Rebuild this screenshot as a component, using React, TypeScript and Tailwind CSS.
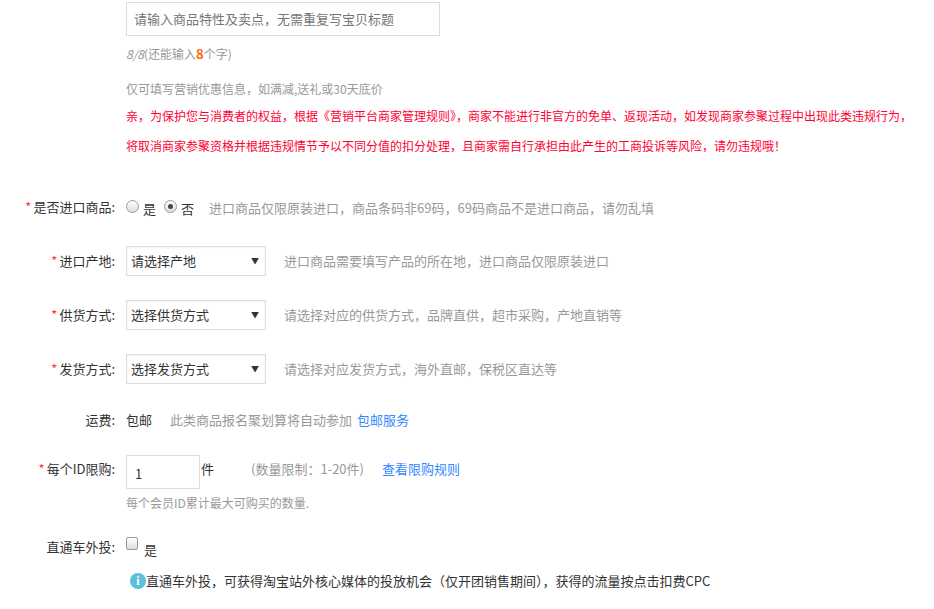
export default function App() {
  const font = { fontFamily: '"Microsoft YaHei","Noto Sans CJK SC",sans-serif' };
  const Label = ({ req, children }: { req?: boolean; children: React.ReactNode }) => (
    <div className="w-[126px] shrink-0 text-right text-[13px] text-[#333] pr-[11px]">
      {req && <span className="text-[#f33] mr-[2px]">*</span>}
      {children}
    </div>
  );
  const Select = ({ text }: { text: string }) => (
    <div className="w-[140px] h-[30px] border border-[#ddd] flex items-center justify-between px-[4px] text-[13px] text-[#333] shadow-[inset_0_1px_2px_rgba(0,0,0,0.05)]">
      <span>{text}</span>
      <span className="text-[8px] mr-[2px]">▼</span>
    </div>
  );
  const Radio = ({ on }: { on?: boolean }) => (
    <span className="w-[13px] h-[13px] rounded-full border border-[#999] bg-gradient-to-b from-white to-[#ddd] flex items-center justify-center">
      {on && <span className="w-[5px] h-[5px] rounded-full bg-[#444]" />}
    </span>
  );
  return (
    <div className="w-[934px] h-[609px] bg-white overflow-hidden text-[#999]" style={font}>
      <div className="pl-[126px] pt-[2px]">
        <div className="w-[314px] h-[34px] border border-[#ddd] flex items-center px-[7px] text-[13px] text-[#777]">
          请输入商品特性及卖点，无需重复写宝贝标题
        </div>
        <div className="mt-[8px] text-[12px] text-[#999]">
          <i>8/8</i>(还能输入<b className="text-[#f60] text-[13px]">8</b>个字)
        </div>
        <div className="mt-[16px] text-[12px] text-[#999]">仅可填写营销优惠信息，如满减,送礼或30天底价</div>
        <div className="mt-[9px] text-[12px] text-[#f03] leading-[18px] whitespace-nowrap">
          亲，为保护您与消费者的权益，根据《营销平台商家管理规则》，商家不能进行非官方的免单、返现活动，如发现商家参聚过程中出现此类违规行为，
        </div>
        <div className="mt-[12px] text-[12px] text-[#f03] leading-[18px] whitespace-nowrap">
          将取消商家参聚资格并根据违规情节予以不同分值的扣分处理，且商家需自行承担由此产生的工商投诉等风险，请勿违规哦！
        </div>
      </div>

      <div className="mt-[42px] flex items-center h-[20px]">
        <Label req>是否进口商品:</Label>
        <div className="flex items-center text-[13px] text-[#333]">
          <Radio /><span className="ml-[4px] mt-[4px]">是</span>
          <span className="ml-[8px]"><Radio on /></span><span className="ml-[4px] mt-[4px]">否</span>
          <span className="ml-[15px] mt-[2px] text-[#999]">进口商品仅限原装进口，商品条码非69码，69码商品不是进口商品，请勿乱填</span>
        </div>
      </div>

      {[
        ["进口产地:", "请选择产地", "进口商品需要填写产品的所在地，进口商品仅限原装进口", 29],
        ["供货方式:", "选择供货方式", "请选择对应的供货方式，品牌直供，超市采购，产地直销等", 24],
        ["发货方式:", "选择发货方式", "请选择对应发货方式，海外直邮，保税区直达等", 24],
      ].map(([l, s, h, m]) => (
        <div key={l as string} className="flex items-center" style={{ marginTop: m as number }}>
          <Label req>{l}</Label>
          <Select text={s as string} />
          <span className="ml-[18px] text-[13px] text-[#999]">{h}</span>
        </div>
      ))}

      <div className="mt-[27px] flex items-center h-[18px] text-[13px]">
        <Label>运费:</Label>
        <span className="text-[#333]">包邮</span>
        <span className="ml-[18px] text-[#999]">此类商品报名聚划算将自动参加</span>
        <span className="ml-[5px] text-[#38f]">包邮服务</span>
      </div>

      <div className="mt-[26px] flex items-start text-[13px]">
        <div className="mt-[4px]"><Label req>每个ID限购:</Label></div>
        <div className="w-[74px] h-[34px] border border-[#ddd] flex items-center pl-[8px] pt-[4px] text-[#333]">1</div>
        <span className="ml-[1px] mt-[4px] text-[#333]">件</span>
        <span ml-0="" className="ml-[37px] mt-[4px] text-[#999]">(数量限制：1-20件)</span>
        <span className="ml-[18px] mt-[4px] text-[#38f]">查看限购规则</span>
      </div>
      <div className="pl-[126px] mt-[5px] text-[12px] text-[#999]">每个会员ID累计最大可购买的数量.</div>

      <div className="mt-[22px] flex items-center text-[13px]">
        <Label>直通车外投:</Label>
        <span className="w-[12px] h-[13px] rounded-[2px] border border-[#999] bg-gradient-to-b from-white to-[#ddd] -mt-[6px]" />
        <span className="ml-[6px] mt-[6px] text-[#333]">是</span>
      </div>
      <div className="pl-[130px] mt-[12px] flex items-center text-[13px] text-[#333]">
        <span className="w-[16px] h-[16px] rounded-full bg-[#5bc0de] text-white text-[12px] font-bold flex items-center justify-center" style={{ fontFamily: "Georgia,serif" }}>i</span>
        <span>直通车外投，可获得淘宝站外核心媒体的投放机会（仅开团销售期间），获得的流量按点击扣费CPC</span>
      </div>
    </div>
  );
}
